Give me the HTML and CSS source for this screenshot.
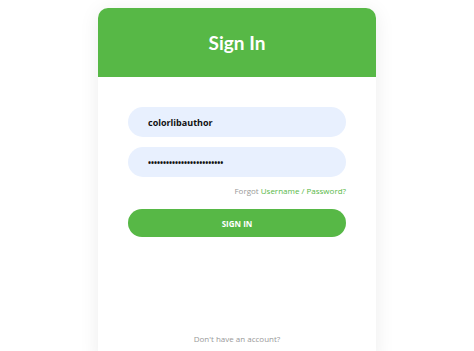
FILE: index.html
```html
<!DOCTYPE html>
<html lang="en">
<head>
    <meta charset="UTF-8">
    <meta name="viewport" content="width=device-width, initial-scale=1.0">
    <title>Sign In</title>
    <link rel="stylesheet" href="styles.css">
</head>
<body>
    <div class="login-card">
        <div class="login-header">Sign In</div>

        <form class="login-form">
            <input class="field" type="text" name="username" value="colorlibauthor">
            <input class="field" type="password" name="pass" value="colorlibauthor12345678901">

            <div class="forgot">
                Forgot <a href="#">Username / Password?</a>
            </div>

            <button type="button" class="btn-login">Sign in</button>

            <div class="signup">Don't have an account?</div>
        </form>
    </div>
</body>
</html>
```

FILE: styles.css
```css
body {
    margin: 0;
    background: #fff;
    font-family: "Open Sans", "Liberation Sans", sans-serif;
}
.login-card {
    width: 278px;
    margin: 8px auto 0;
    background: #fff;
    border-radius: 10px 10px 0 0;
    overflow: hidden;
    box-shadow: 0 3px 20px 0 rgba(0,0,0,0.08);
}
.login-header {
    height: 69px;
    background: #57b846;
    color: #fff;
    font-family: Lato, "Open Sans", sans-serif;
    font-weight: bold;
    font-size: 19px;
    display: flex;
    align-items: center;
    justify-content: center;
}
.login-form {
    display: flex;
    flex-direction: column;
    padding: 30px 30px 0;
    height: 283px;
    box-sizing: border-box;
}
.field {
    height: 30px;
    border: none;
    outline: none;
    border-radius: 15px;
    background: #e8f0fe;
    padding: 0 20px;
    margin-bottom: 10px;
    font-family: "Open Sans", sans-serif;
    font-weight: bold;
    font-size: 9px;
    color: #111;
}
.field[type="password"] {
    font-size: 8px;
}
.forgot {
    text-align: right;
    font-size: 8px;
    color: #999;
    margin-top: -2px;
}
.forgot a {
    color: #57b846;
    text-decoration: none;
}
.btn-login {
    margin-top: 13px;
    height: 28px;
    border: none;
    border-radius: 14px;
    background: #57b846;
    color: #fff;
    font-family: "Open Sans", sans-serif;
    font-weight: bold;
    font-size: 8px;
    text-transform: uppercase;
    cursor: pointer;
}
.signup {
    margin-top: auto;
    text-align: center;
    font-size: 8px;
    color: #999;
    padding-bottom: 16px;
}
```
